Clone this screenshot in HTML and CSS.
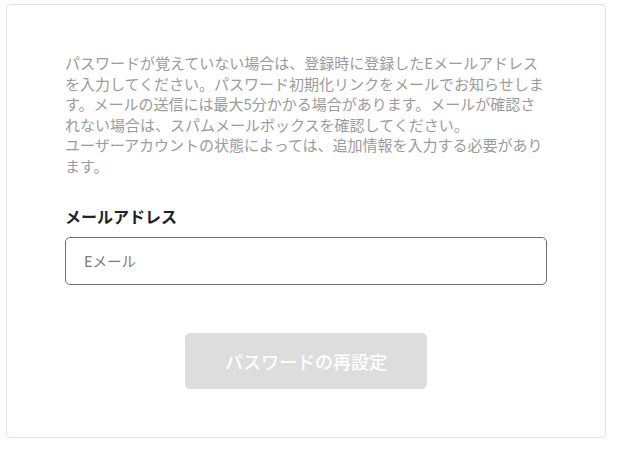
FILE: index.html
```html
<!DOCTYPE html>
<html lang="ja">
<head>
<meta charset="utf-8">
<link rel="stylesheet" href="styles.css">
</head>
<body>
<div class="page">
  <div class="card">
    <p class="desc">パスワードが覚えていない場合は、登録時に登録したEメールアドレスを入力してください。パスワード初期化リンクをメールでお知らせします。メールの送信には最大5分かかる場合があります。メールが確認されない場合は、スパムメールボックスを確認してください。<br>ユーザーアカウントの状態によっては、追加情報を入力する必要があります。</p>
    <label class="label" for="email">メールアドレス</label>
    <input class="input" id="email" type="text" placeholder="Eメール">
    <div class="actions">
      <button class="btn" type="button" disabled>パスワードの再設定</button>
    </div>
  </div>
</div>
</body>
</html>
```

FILE: styles.css
```css
html, body {
  margin: 0;
  padding: 0;
  background: #ffffff;
}
body {
  font-family: "Noto Sans CJK JP", "Noto Sans", sans-serif;
}
.page {
  padding: 4px 11px 0 6px;
}
.card {
  width: 600px;
  height: 434px;
  box-sizing: border-box;
  border: 1px solid #e2e2e2;
  border-radius: 4px;
  box-shadow: 0 1px 2px rgba(0,0,0,0.04);
  padding: 48px 58px 0 58px;
  display: flex;
  flex-direction: column;
}
.desc {
  margin: 0;
  font-size: 15px;
  line-height: 20.6px;
  color: #9b9b9b;
  letter-spacing: 0;
}
.label {
  margin-top: 27px;
  font-size: 16px;
  line-height: 24px;
  font-weight: 600;
  color: #222222;
}
.input {
  margin-top: 9px;
  height: 48px;
  box-sizing: border-box;
  border: 1px solid #6f6f6f;
  border-radius: 5px;
  padding: 0 18px;
  font-family: inherit;
  font-size: 14.5px;
  color: #333;
  outline: none;
}
.input::placeholder {
  color: #7a7a7a;
}
.actions {
  margin-top: 48px;
  display: flex;
  justify-content: center;
}
.btn {
  width: 242px;
  height: 56px;
  border: none;
  border-radius: 5px;
  background: #dddddd;
  color: #ffffff;
  font-family: inherit;
  font-size: 18px;
  font-weight: 500;
  padding: 0;
}
```
